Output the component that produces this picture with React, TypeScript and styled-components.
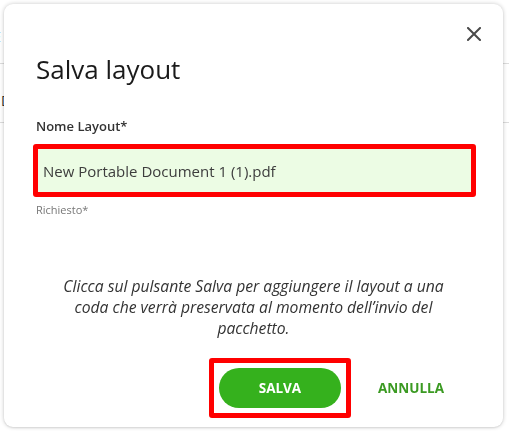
import styled, { createGlobalStyle } from 'styled-components';

const GlobalStyle = createGlobalStyle`
  html, body {
    margin: 0;
    padding: 0;
    background: #ffffff;
    font-family: 'Open Sans', 'Noto Sans', sans-serif;
    color: #333;
    overflow: hidden;
  }
`;

export default function App() {
  return (
    <>
      <GlobalStyle />
      <Backdrop>
        <BackRow height={64}>
          <BackGlyph shift={-7}>E</BackGlyph>
        </BackRow>
        <BackRow height={59}>
          <BackGlyph shift={1}>D</BackGlyph>
        </BackRow>
      </Backdrop>

      <Overlay>
        <Dialog>
          <CloseButton aria-label="Chiudi">
            <svg width="14" height="14" viewBox="0 0 14 14">
              <path d="M1 1 L13 13 M13 1 L1 13" stroke="#4a4a4a" strokeWidth="2" strokeLinecap="square" />
            </svg>
          </CloseButton>

          <Title>Salva layout</Title>

          <Field>
            <Label>Nome Layout*</Label>
            <Highlight>
              <Input defaultValue="New Portable Document 1 (1).pdf" />
            </Highlight>
            <Hint>Richiesto*</Hint>
          </Field>

          <Note>
            Clicca sul pulsante Salva per aggiungere il layout a una coda che verrà preservata al momento dell’invio del
            pacchetto.
          </Note>

          <Actions>
            <Highlight gap>
              <PrimaryButton>SALVA</PrimaryButton>
            </Highlight>
            <TextButton>ANNULLA</TextButton>
          </Actions>
        </Dialog>
      </Overlay>
    </>
  );
}

const Backdrop = styled.div`
  display: flex;
  flex-direction: column;
`;

const BackRow = styled.div<{ height: number }>`
  height: ${p => p.height}px;
  border-bottom: 1px solid #dcdcdc;
  padding-top: 29px;
  box-sizing: border-box;
  display: flex;
  align-items: flex-start;
`;

const BackGlyph = styled.span<{ shift: number }>`
  font-size: 14px;
  line-height: 16px;
  color: #333;
  margin-left: ${p => p.shift}px;
`;

const Overlay = styled.div`
  position: fixed;
  inset: 0;
  padding: 4px 6px 4px 4px;
  display: flex;
  box-sizing: border-box;
`;

const Dialog = styled.div`
  position: relative;
  flex: 1;
  background: #fff;
  border-radius: 9px;
  box-shadow: 0 0 4px rgba(0, 0, 0, 0.22), 0 1px 2px rgba(0, 0, 0, 0.08);
  padding: 48px 30px 0 32px;
  display: flex;
  flex-direction: column;
`;

const CloseButton = styled.button`
  position: absolute;
  top: 20px;
  right: 19px;
  width: 20px;
  height: 20px;
  padding: 0;
  border: none;
  background: transparent;
  display: flex;
  align-items: center;
  justify-content: center;
  cursor: pointer;
`;

const Title = styled.h2`
  margin: 0;
  font-size: 26px;
  font-weight: 400;
  line-height: 34px;
  color: #1a1a1a;
`;

const Field = styled.div`
  margin-top: 31px;
  display: flex;
  flex-direction: column;
`;

const Label = styled.label`
  font-size: 13px;
  font-weight: 600;
  color: #333;
  line-height: 18px;
`;

const Highlight = styled.div<{ gap?: boolean }>`
  border: 5px solid #ff0000;
  border-radius: 3px;
  padding: ${p => (p.gap ? '5px' : '0')};
  display: flex;
  margin: ${p => (p.gap ? '0' : '9px -3px 0 -3px')};
`;

const Input = styled.input`
  flex: 1;
  height: 43px;
  box-sizing: border-box;
  border: none;
  outline: none;
  background: #ecfce4;
  padding: 0 5px;
  font-family: 'Open Sans', 'Noto Sans', sans-serif;
  font-size: 15px;
  color: #3d3d3d;
`;

const Hint = styled.span`
  margin-top: 5px;
  font-size: 11px;
  color: #777;
  line-height: 16px;
`;

const Note = styled.p`
  margin: 58px auto 0 auto;
  max-width: 400px;
  position: relative;
  left: -1px;
  text-align: center;
  font-style: italic;
  font-size: 15.7px;
  line-height: 21px;
  color: #333;
`;

const Actions = styled.div`
  margin-top: 19px;
  display: flex;
  align-items: center;
  justify-content: flex-end;
  gap: 27px;
  padding-right: 29px;
`;

const PrimaryButton = styled.button`
  width: 122px;
  height: 40px;
  border: none;
  border-radius: 20px;
  background: #35b11d;
  color: #fff;
  font-family: 'Open Sans', 'Noto Sans', sans-serif;
  font-size: 13.5px;
  font-weight: 700;
  cursor: pointer;
`;

const TextButton = styled.button`
  border: none;
  background: transparent;
  padding: 0;
  color: #3b9a22;
  font-family: 'Open Sans', 'Noto Sans', sans-serif;
  font-size: 13.5px;
  font-weight: 700;
  cursor: pointer;
`;
